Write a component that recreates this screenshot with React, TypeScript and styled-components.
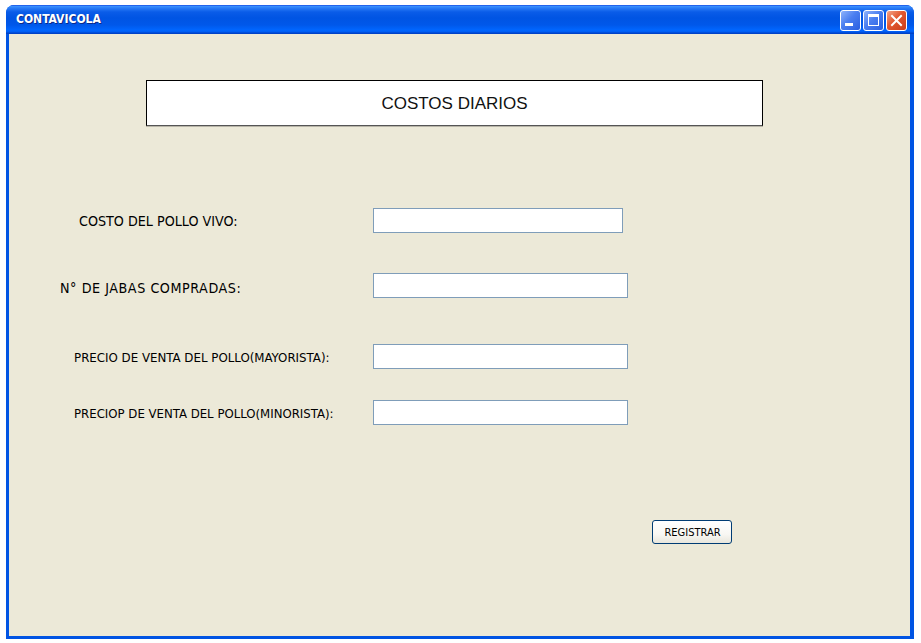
import styled, { createGlobalStyle } from "styled-components";

const GlobalStyle = createGlobalStyle`
    html, body {
        margin: 0;
        padding: 0;
        background: #ffffff;
    }
`;

const Window = styled.div`
    margin: 5px 0 0 6px;
    width: 908px;
    height: 634px;
    display: flex;
    flex-direction: column;
    border-radius: 8px 8px 0 0;
    overflow: hidden;
    background: #0054e3;
`;

const TitleBar = styled.div`
    height: 29px;
    flex-shrink: 0;
    display: flex;
    align-items: center;
    justify-content: space-between;
    padding: 0 7px 0 10px;
    background: linear-gradient(
        to bottom,
        #0831d9 0px,
        #3d95ff 1px,
        #2a7cf7 3px,
        #0a5ce8 7px,
        #0054e3 13px,
        #0058ea 20px,
        #0066ff 25px,
        #005cf2 27px,
        #0042c8 28px
    );
`;

const Title = styled.span`
    color: #ffffff;
    font-family: "DejaVu Sans Condensed", "DejaVu Sans", sans-serif;
    font-weight: bold;
    font-size: 12px;
    text-shadow: 1px 1px 0 #0a2a8a;
    padding-bottom: 1px;
`;

const Controls = styled.div`
    display: flex;
    gap: 2px;
    padding-top: 1px;
`;

const CtrlButton = styled.div<{ $close?: boolean }>`
    width: 21px;
    height: 21px;
    box-sizing: border-box;
    border: 1px solid #ffffff;
    border-radius: 3px;
    display: flex;
    align-items: center;
    justify-content: center;
    background: ${p =>
        p.$close
            ? "linear-gradient(135deg, #f4a588 0%, #e2572f 45%, #c93d1c 100%)"
            : "linear-gradient(135deg, #8fb3fb 0%, #4a7ef0 45%, #2a5fe0 100%)"};

    svg {
        display: block;
    }
`;

const Body = styled.div`
    flex: 1;
    margin: 0 4px 3px 3px;
    background: #ece9d8;
    display: flex;
    flex-direction: column;
`;

const HeaderBox = styled.div`
    margin: 46px 0 0 137px;
    width: 617px;
    height: 46px;
    box-sizing: border-box;
    background: #ffffff;
    border: 1px solid #000000;
    border-bottom-color: #555555;
    box-shadow: 0 1px 0 #b8b5a8;
    display: flex;
    align-items: center;
    justify-content: center;
    font-family: "Liberation Sans", Arial, sans-serif;
    font-size: 17px;
    color: #111111;
    padding-top: 1px;
`;

const Form = styled.div`
    display: flex;
    flex-direction: column;
    margin-top: 82px;
`;

const Row = styled.div<{ $gap: number }>`
    display: grid;
    grid-template-columns: 364px 1fr;
    align-items: center;
    margin-top: ${p => p.$gap}px;
`;

const Label = styled.label<{ $indent: number; $size: number; $drop?: number; $spacing?: number }>`
    padding-left: ${p => p.$indent}px;
    padding-top: ${p => (p.$drop ?? 0) * 2}px;
    font-family: "DejaVu Sans Condensed", "DejaVu Sans", sans-serif;
    font-size: ${p => p.$size}px;
    letter-spacing: ${p => p.$spacing ?? 0}px;
    color: #000000;
    white-space: nowrap;
`;

const TextField = styled.input<{ $width: number }>`
    width: ${p => p.$width}px;
    height: 25px;
    box-sizing: border-box;
    margin: 0;
    border: 1px solid #7f9db9;
    background: #ffffff;
    padding: 0 4px;
    font-family: "DejaVu Sans Condensed", "DejaVu Sans", sans-serif;
    font-size: 12px;
    outline: none;
`;

const Actions = styled.div`
    margin: 95px 0 0 643px;
`;

const Button = styled.button`
    width: 80px;
    height: 24px;
    box-sizing: border-box;
    margin: 0;
    padding: 0 0 0 1px;
    border: 1px solid #003c74;
    border-radius: 3px;
    background: linear-gradient(to bottom, #ffffff 0%, #f8f7f3 60%, #e8e6dc 100%);
    font-family: "DejaVu Sans Condensed", "DejaVu Sans", sans-serif;
    font-size: 11px;
    color: #000000;
`;

function MinIcon() {
    return (
        <svg width="19" height="19" viewBox="0 0 19 19">
            <rect x="4" y="12" width="8" height="3" fill="#ffffff" />
        </svg>
    );
}

function MaxIcon() {
    return (
        <svg width="19" height="19" viewBox="0 0 19 19">
            <rect x="4" y="3" width="11" height="3" fill="#ffffff" />
            <rect x="4.5" y="3.5" width="10" height="11" fill="none" stroke="#ffffff" />
        </svg>
    );
}

function CloseIcon() {
    return (
        <svg width="19" height="19" viewBox="0 0 19 19">
            <path d="M5 5 L14 14 M14 5 L5 14" stroke="#ffffff" strokeWidth="2" strokeLinecap="square" />
        </svg>
    );
}

const fields = [
    { label: "COSTO DEL POLLO VIVO:", indent: 70, size: 14.2, width: 250, gap: 0, drop: 0, spacing: 0 },
    { label: "N° DE JABAS COMPRADAS:", indent: 51, size: 14.2, width: 255, gap: 40, drop: 2.5, spacing: 0.55 },
    { label: "PRECIO DE VENTA DEL POLLO(MAYORISTA):", indent: 65, size: 13.15, width: 255, gap: 46, drop: 1, spacing: 0 },
    { label: "PRECIOP DE VENTA DEL POLLO(MINORISTA):", indent: 65, size: 13.05, width: 255, gap: 31, drop: 1, spacing: 0 },
];

export default function App() {
    return (
        <>
            <GlobalStyle />
            <Window>
                <TitleBar>
                    <Title>CONTAVICOLA</Title>
                    <Controls>
                        <CtrlButton><MinIcon /></CtrlButton>
                        <CtrlButton><MaxIcon /></CtrlButton>
                        <CtrlButton $close><CloseIcon /></CtrlButton>
                    </Controls>
                </TitleBar>
                <Body>
                    <HeaderBox>COSTOS DIARIOS</HeaderBox>
                    <Form>
                        {fields.map(f => (
                            <Row key={f.label} $gap={f.gap}>
                                <Label $indent={f.indent} $size={f.size} $drop={f.drop} $spacing={f.spacing}>
                                    {f.label}
                                </Label>
                                <TextField type="text" $width={f.width} />
                            </Row>
                        ))}
                    </Form>
                    <Actions>
                        <Button>REGISTRAR</Button>
                    </Actions>
                </Body>
            </Window>
        </>
    );
}
